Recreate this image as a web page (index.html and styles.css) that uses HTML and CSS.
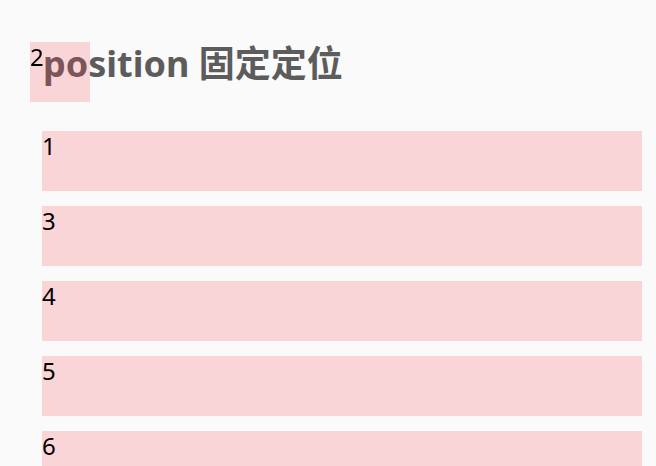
FILE: index.html
```html
<!DOCTYPE html>
<html lang="zh-CN">
<head>
    <meta charset="UTF-8">
    <title>position 固定定位</title>
    <link rel="stylesheet" href="styles.css">
</head>
<body>
    <h1 class="title">position 固定定位</h1>
    <div class="list">
        <div class="box">1</div>
        <div class="box fixed">2</div>
        <div class="box">3</div>
        <div class="box">4</div>
        <div class="box">5</div>
        <div class="box">6</div>
        <div class="box">7</div>
        <div class="box">8</div>
    </div>
</body>
</html>
```

FILE: styles.css
```css
body {
    margin: 0;
    padding: 42px 14px 0 42px;
    background: #fafafa;
    font-family: "Noto Sans", "Noto Sans CJK SC", sans-serif;
}

.title {
    margin: 0 0 46px 1px;
    font-size: 36px;
    line-height: 1.2;
    font-weight: bold;
    color: #5c5c5c;
}

.list {
    display: flex;
    flex-direction: column;
    gap: 15px;
}

.box {
    width: 600px;
    height: 60px;
    font-size: 24px;
    line-height: 1.25;
    color: #000;
    background: rgba(250, 66, 80, 0.2);
}

.fixed {
    position: fixed;
    top: 42px;
    left: 30px;
    width: 60px;
    height: 60px;
}
```
